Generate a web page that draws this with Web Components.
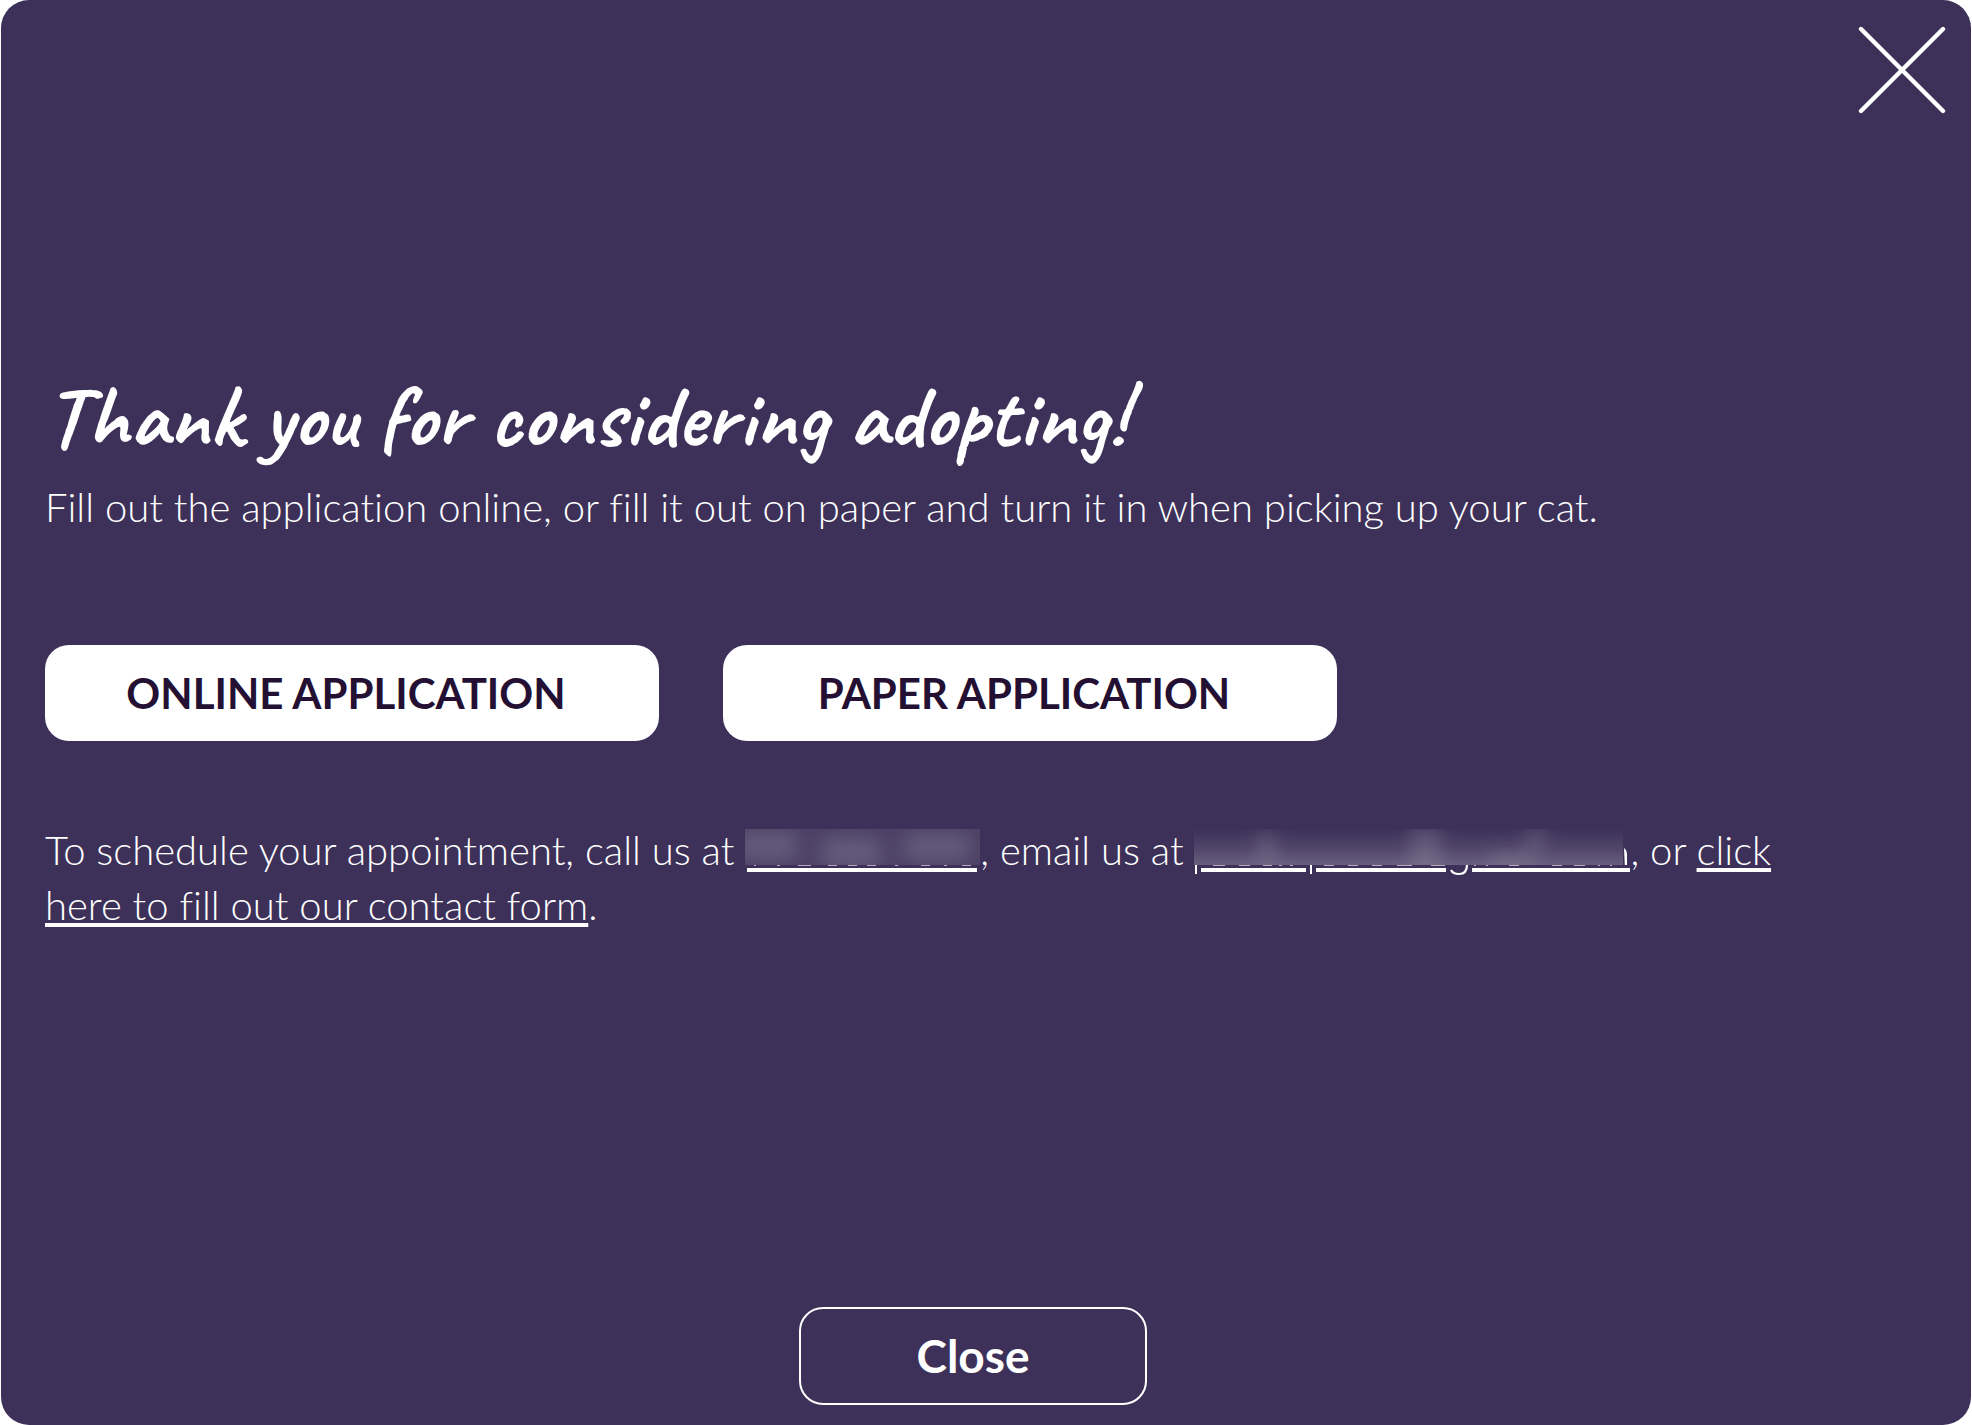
<!DOCTYPE html>
<html lang="en">
<head>
<meta charset="utf-8">
<meta name="viewport" content="width=device-width, initial-scale=1">
<title>Adoption application</title>
<style>
  html, body { height: 100%; }
  body { margin: 0; background: #fff; font-family: Lato, "Open Sans", sans-serif; font-variant-ligatures: none; }
</style>
</head>
<body>
<adopt-dialog>
  <span slot="title">Thank you for considering adopting!</span>
  <span slot="intro">Fill out the application online, or fill it out on paper and turn it in when picking up your cat.</span>
  <action-button slot="actions">ONLINE APPLICATION</action-button>
  <action-button slot="actions">PAPER APPLICATION</action-button>
  <contact-note slot="contact"></contact-note>
  <action-button slot="footer" variant="outline">Close</action-button>
</adopt-dialog>

<script>
class AdoptDialog extends HTMLElement {
  constructor() {
    super();
    this.attachShadow({ mode: 'open' }).innerHTML = `
      <style>
        :host { display: flex; flex-direction: column; min-height: 100%; box-sizing: border-box; padding: 0 1px; }
        section {
          box-sizing: border-box; min-height: 100vh; display: flex; flex-direction: column;
          padding: 26px 70px 20px 44px; border-radius: 28px;
          background: #3d3159; color: #fff;
        }
        header { display: flex; justify-content: flex-end; margin-right: -45px; }
        main { flex: 1; display: flex; flex-direction: column; padding-top: 253px; }
        h1 {
          margin: 0 0 13px;
          font-family: Caveat, cursive;
          font-weight: 700; font-size: 88px; line-height: 100px;
        }
        p { margin: 0; font-weight: 300; font-size: 40px; line-height: 55px; }
        .actions { display: flex; flex-wrap: wrap; gap: 64px; margin: 110px 0 82px; }
        .contact { max-width: 1780px; }
        footer { display: flex; justify-content: center; }
      </style>
      <section role="dialog" aria-labelledby="t">
        <header><close-icon></close-icon></header>
        <main>
          <h1 id="t"><slot name="title"></slot></h1>
          <p><slot name="intro"></slot></p>
          <div class="actions"><slot name="actions"></slot></div>
          <p class="contact"><slot name="contact"></slot></p>
        </main>
        <footer><slot name="footer"></slot></footer>
      </section>`;
  }
}

class CloseIcon extends HTMLElement {
  constructor() {
    super();
    this.attachShadow({ mode: 'open' }).innerHTML = `
      <style>
        :host { display: block; }
        button { display: block; margin: 0; padding: 0; border: 0; background: none; color: inherit; cursor: pointer; }
        svg { display: block; }
      </style>
      <button type="button" aria-label="Close dialog">
        <svg width="88" height="88" viewBox="0 0 88 88" fill="none" stroke="currentColor" stroke-width="4.4" stroke-linecap="round">
          <path d="M3 3 L85 85 M85 3 L3 85"/>
        </svg>
      </button>`;
  }
}

class ActionButton extends HTMLElement {
  constructor() {
    super();
    this.attachShadow({ mode: 'open' }).innerHTML = `
      <style>
        :host { display: block; width: 614px; }
        :host([variant="outline"]) { width: 348px; }
        button {
          display: block; width: 100%; height: 96px; margin: 0; padding: 0 12px 0 0;
          border: 0; border-radius: 24px; background: #fff; color: #241033;
          font: 700 42px/48px Lato, "Open Sans", sans-serif; cursor: pointer;
        }
        :host([variant="outline"]) button {
          height: 98px; padding: 0; border: 2px solid #fff; background: none; color: #fff; font-size: 46px;
        }
      </style>
      <button type="button"><slot></slot></button>`;
  }
}

class RedactedLink extends HTMLElement {
  constructor() {
    super();
    const email = this.getAttribute('kind') === 'email';
    const art = email ? `
      <svg width="436" height="36" viewBox="0 0 436 36">
        <defs>
          <linearGradient id="v" x2="0" y2="1"><stop offset="0" stop-color="#fff" stop-opacity="0"/><stop offset=".45" stop-color="#fff" stop-opacity=".08"/><stop offset="1" stop-color="#fff" stop-opacity=".22"/></linearGradient>
          <filter id="b" x="-50%" y="-50%" width="200%" height="200%"><feGaussianBlur stdDeviation="9"/></filter>
          <clipPath id="c"><rect width="429" height="36"/></clipPath>
        </defs>
        <g clip-path="url(#c)">
          <rect width="429" height="36" fill="url(#v)"/>
          <g filter="url(#b)" fill="#fff" fill-opacity=".13"><rect x="216" y="-4" width="31" height="44"/><rect x="64" y="2" width="17" height="34"/><rect x="332" y="-2" width="19" height="24"/><rect x="296" y="24" width="43" height="14"/></g>
        </g>
        <g fill="#fff">
          <path d="M1 36h2v9h-2zM116 36h2v9h-2zM430 19q3 2 3 7v10h-2.200z"/>
          <path d="M7 39h105v4H7zM122 39h130v4H122zM278 39h158v4H278z"/>
          <path d="M19 36h12v1H19zM45 36h11v1h-11zM69 36h9v1h-9zM85 36h3v1h-3zM96 36h3v1h-3zM130 36h10v1h-10zM154 36h10v1h-10zM178 36h10v1h-10zM203 36h15v1h-15zM237 36h14v1h-14zM280 36h2v1h-2zM292 36h2v1h-2zM315 36h10v1h-10zM358 36h10v1h-10zM380 36h11v1h-11zM404 36h2v1h-2zM416 36h2v1h-2z" fill-opacity=".6"/>
        </g>
        <path d="M257 41q2 4 8 4 8 0 8-9" fill="none" stroke="#fff" stroke-width="2.2"/>
      </svg>` : `
      <svg width="235" height="36" viewBox="0 0 235 36">
        <defs>
          <filter id="b" x="-50%" y="-50%" width="200%" height="200%"><feGaussianBlur stdDeviation="10"/></filter>
          <clipPath id="c"><rect width="235" height="36"/></clipPath>
        </defs>
        <g clip-path="url(#c)">
          <rect width="235" height="36" fill="#fff" fill-opacity=".07"/>
          <g filter="url(#b)" fill="#fff" fill-opacity=".15"><rect x="-8" y="2" width="60" height="30"/><rect x="76" y="8" width="60" height="32"/><rect x="158" y="4" width="68" height="28"/></g>
        </g>
        <rect x="2" y="39" width="230" height="4" fill="#fff"/>
        <path d="M9 36h2v1H9zM32 36h3v1h-3zM53 36h13v1H53zM83 36h9v1h-9zM103 36h9v1h-9zM122 36h9v1h-9zM150 36h3v1h-3zM176 36h9v1h-9zM199 36h3v1h-3zM217 36h9v1h-9z" fill="#fff" fill-opacity=".6"/>
      </svg>`;
    this.attachShadow({ mode: 'open' }).innerHTML = `
      <style>
        :host { display: inline-block; vertical-align: baseline; height: 36px; }
        a { display: block; height: 36px; }
        svg { display: block; overflow: visible; }
      </style>
      <a href="#" aria-label="${email ? 'Email us' : 'Call us'}">${art}</a>`;
  }
}

class ContactNote extends HTMLElement {
  constructor() {
    super();
    this.attachShadow({ mode: 'open' }).innerHTML = `
      <style>
        :host { display: inline; }
        .link { color: inherit; text-decoration: underline; text-decoration-thickness: 4px; text-underline-offset: 3px; }
      </style>To schedule your appointment, call us at <redacted-link kind="phone"></redacted-link>, email us at <redacted-link kind="email"></redacted-link>, or <a class="link" href="#">click here to fill out our contact form</a>.`;
  }
}

customElements.define('close-icon', CloseIcon);
customElements.define('redacted-link', RedactedLink);
customElements.define('contact-note', ContactNote);
customElements.define('action-button', ActionButton);
customElements.define('adopt-dialog', AdoptDialog);
</script>
</body>
</html>
